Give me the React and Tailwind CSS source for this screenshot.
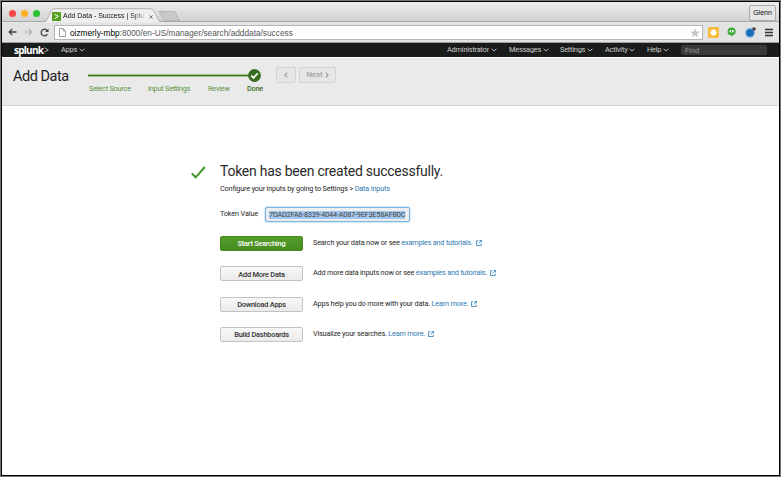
import React from "react";

const Chevron = ({ className = "" }) => (
  <svg viewBox="0 0 6 4" className={`h-[4px] w-[6px] shrink-0 ${className}`} fill="none" stroke="currentColor" strokeWidth="0.9">
    <path d="M0.6 0.7 3 3.1 5.4 0.7" />
  </svg>
);

const External = () => (
  <svg viewBox="0 0 12 12" className="mb-px ml-[3px] h-[6px] w-[6px] shrink-0" fill="none" stroke="#3a83b8" strokeWidth="1.700">
    <path d="M5 1.500H1v9.500h9.500V7M7 .9h4.200V5M11 1 5 7" />
  </svg>
);

function BrowserTabs() {
  return (
    <div className="flex h-[20px] shrink-0 border-b border-[#a9a9a9] bg-linear-to-b from-[#ececec] to-[#d2d2d2]">
      <div className="ml-[7px] mt-[8px] flex gap-[5px]">
        <span className="size-[7px] rounded-full bg-[#fc4548]" />
        <span className="size-[7px] rounded-full bg-[#fdaf24]" />
        <span className="size-[7px] rounded-full bg-[#28c231]" />
      </div>
      <div className="relative ml-[4px] mt-[6px] h-[15px] w-[141px]">
        <svg className="absolute inset-0" width="141" height="15" viewBox="0 0 141 15">
          <path d="M0 14.500C5 14 5 1 10 .8H107C111 1 113 14 117 14.500Z" fill="#efefef" />
          <path d="M0 13.500C5 13.500 5 1 10 .7H107C111 1 113 13.500 117 13.500" fill="none" stroke="#a5a5a5" strokeWidth=".8" />
          <path d="M115 3.500H130C132 3.500 134 12 136 12.500H121C118 12.500 117 5 115 3.500Z" fill="#c9c9c9" stroke="#aaa" strokeWidth=".7" />
        </svg>
        <div className="relative flex h-[17px] items-center pl-[8px] font-['Liberation_Sans',sans-serif] text-[7px] text-[#222]">
          <svg width="9" height="9" viewBox="0 0 9 9" className="shrink-0">
            <rect width="9" height="9" fill="#55a020" />
            <path d="M2.600 2.300 6.300 4.400 2.600 6.600" fill="none" stroke="#fff" strokeWidth="1" />
          </svg>
          <span className="ml-[2px] w-[83px] whitespace-nowrap bg-linear-to-r from-[#111] from-82% to-[#dcdcdc] bg-clip-text tracking-[-0.003em] text-transparent">Add Data - Success | Splu</span>
          <svg width="4" height="4" viewBox="0 0 4 4" className="ml-[3px] shrink-0" stroke="#777" strokeWidth=".9">
            <path d="M.3.3 3.700 3.700M3.700.3.3 3.700" />
          </svg>
        </div>
      </div>
      <div className="ml-auto mr-[3px] mt-[3px] flex h-[16px] w-[27px] items-center justify-center rounded-[2px] border border-[#aaa] bg-[#e6e6e6] pt-px font-['Liberation_Sans',sans-serif] text-[7px] text-[#111]">Glenn</div>
    </div>
  );
}

function AddressBar() {
  return (
    <div className="flex h-[21px] shrink-0 items-center border-b border-[#a0a0a0] bg-[#e3e3e3]">
      <svg width="9" height="8" viewBox="0 0 9 8" className="ml-[6px]" fill="none" stroke="#444" strokeWidth="1.300">
        <path d="M8.500 4H1.200M4.200 1 1.200 4l3 3" />
      </svg>
      <svg width="9" height="8" viewBox="0 0 9 8" className="ml-[7px]" fill="none" stroke="#b0b0b0" strokeWidth="1.200">
        <path d="M.5 4h7.300M4.800 1l3 3-3 3" />
      </svg>
      <svg width="9" height="9" viewBox="0 0 9 9" className="ml-[7px]" fill="none" stroke="#444" strokeWidth="1.300">
        <path d="M7.300 6.200A3.300 3.300 0 1 1 6.800 2.200" />
        <path d="M8.500.5v3.500H5z" fill="#444" stroke="none" />
      </svg>
      <div className="ml-[5px] flex h-[15px] flex-1 items-center border border-[#b5b5b5] bg-white font-['Liberation_Sans',sans-serif] text-[8.300px]">
        <svg width="7" height="9" viewBox="0 0 7 9" className="ml-[4px]" fill="#fff" stroke="#888" strokeWidth=".8">
          <path d="M.5.5h3.700L6.500 3v5.500h-6zM4.200.5V3h2.300" />
        </svg>
        <span className="ml-[4px] mt-[2px] whitespace-nowrap tracking-[-0.001em] text-[#555]"><span className="text-black">oizmerly-mbp</span>:8000/en-US/manager/search/adddata/success</span>
        <svg width="10" height="10" viewBox="0 0 10 10" className="ml-auto mr-[2px] mt-px">
          <path d="m5 .3 1.300 3.200 3.400.2-2.600 2.200.8 3.400L5 7.500 2.100 9.300l.8-3.400L.3 3.700l3.400-.2z" fill="#c7c7c7" />
        </svg>
      </div>
      <svg width="11" height="11" viewBox="0 0 11 11" className="ml-[5px]">
        <rect width="11" height="11" rx="1" fill="#f6bd3c" />
        <path d="M5.500 2.200v6.600M2.200 5.500h6.600M3.400 3.400l4.200 4.200M7.600 3.400 3.400 7.600" stroke="#fff" strokeWidth="1.500" />
      </svg>
      <svg width="9" height="11" viewBox="0 0 9 11" className="ml-[8px]">
        <path d="M4.500.5a4 4 0 0 1 1 7.900L4.500 10.300V8.500a4 4 0 0 1 0-8z" fill="#3cad3b" />
        <path d="M2.500 3h1.600v2L3 6V4.700h-.5zM5 3h1.600v2L5.500 6V4.700H5z" fill="#fff" />
      </svg>
      <svg width="11" height="11" viewBox="0 0 11 11" className="ml-[9px]">
        <circle cx="5" cy="5.800" r="4.600" fill="#e7f2fb" stroke="#74a5d0" strokeWidth=".8" />
        <circle cx="5" cy="5.800" r="3.900" fill="#136fb9" />
        <circle cx="9" cy="2" r="1.800" fill="#4b3b48" />
      </svg>
      <svg width="8" height="9" viewBox="0 0 8 9" className="ml-[9px] mr-[6px]" stroke="#333" strokeWidth="1.500">
        <path d="M0 1.500h8M0 4.500h8M0 7.500h8" />
      </svg>
    </div>
  );
}

function Menu({ width, children }) {
  return (
    <div className="flex shrink-0 items-center whitespace-nowrap tracking-[-0.03em]" style={{ width }}>
      {children}
      <Chevron className="ml-[2px]" />
    </div>
  );
}

function NavBar() {
  return (
    <div className="flex h-[14px] shrink-0 items-center bg-[#1a1c1b] text-[7.400px] text-[#ccc]">
      <div className="ml-[12px] flex w-[47px] items-center font-['Open_Sans',sans-serif] text-[10px] font-bold leading-none tracking-[-0.075em] text-white">
        <span className="-mt-[1px]">splunk</span>
        <svg width="5" height="6" viewBox="0 0 5 6" className="ml-px" fill="none" stroke="#aaa" strokeWidth="1">
          <path d="M.3.7 4.300 3 .3 5.300" />
        </svg>
      </div>
      <Menu width={386}>Apps</Menu>
      <Menu width={62}>Administrator</Menu>
      <Menu width={51}>Messages</Menu>
      <Menu width={45}>Settings</Menu>
      <Menu width={42}>Activity</Menu>
      <Menu width={34}>Help</Menu>
      <div className="flex h-[10px] w-[86px] items-center rounded-[2px] bg-[#3a3a3a] pl-[4px] pt-px text-[#999]">Find</div>
    </div>
  );
}

function Header() {
  return (
    <div className="flex h-[48px] shrink-0 border-b border-[#d2d2d2] bg-[#eaeaea] text-[#222]">
      <h1 className="ml-[11px] mt-[9px] w-[73px] whitespace-nowrap text-[14.500px] leading-[20px] tracking-[-0.032em]">Add Data</h1>
      <div className="mt-[11px] w-[190px]">
        <div className="flex h-[13px] items-center">
          <div className="ml-[2px] h-[3px] w-[161px] border-y border-[#a4c491] bg-[#3b711f]" />
          <svg width="13" height="13" viewBox="0 0 13 13" className="-ml-[1px]">
            <circle cx="6.500" cy="6.500" r="6.400" fill="#396c1f" />
            <path d="m3.200 6.600 2.300 2.300L9.800 4.200" fill="none" stroke="#fff" strokeWidth="1.700" />
          </svg>
        </div>
        <div className="ml-[3px] mt-[2px] flex whitespace-nowrap text-[7.300px] leading-[10px] tracking-[-0.028em] text-[#5c9440]">
          <span className="w-[59px]">Select Source</span>
          <span className="w-[60px]">Input Settings</span>
          <span className="w-[39px]">Review</span>
          <span className="font-medium text-[#3c6b25]">Done</span>
        </div>
      </div>
      <div className="mt-[9px] flex h-[16px] gap-[3px] text-[8px] font-medium text-[#a3a3a3]">
        <div className="flex w-[20px] items-center justify-center rounded-[2px] border border-[#d2d2d2] bg-[#e6e6e6]">
          <svg width="4" height="6" viewBox="0 0 4 7" fill="none" stroke="#999" strokeWidth="1.300"><path d="M3.500.6.7 3.500l2.800 2.900" /></svg>
        </div>
        <div className="flex w-[37px] items-center justify-center gap-[2px] rounded-[2px] border border-[#d2d2d2] bg-[#e6e6e6] tracking-[-0.02em]">
          Next
          <svg width="4" height="6" viewBox="0 0 4 7" fill="none" stroke="#999" strokeWidth="1.300"><path d="M.5.6l2.800 2.900L.5 6.400" /></svg>
        </div>
      </div>
    </div>
  );
}

function ActionRow({ label, text, link, primary }) {
  return (
    <div className="flex h-[15px] items-center whitespace-nowrap">
      <button className={`h-[15px] w-[83px] rounded-[2px] border pt-px text-[7.400px] font-medium leading-none tracking-[-0.03em] ${primary ? "border-[#46891f] bg-linear-to-b from-[#559d2a] to-[#468c21] text-white" : "border-[#c2c2c2] bg-linear-to-b from-[#f8f8f8] to-[#ebebeb] text-[#333]"}`}>{label}</button>
      <span className="ml-[10px]">{text} <a className="text-[#2f7ab4]">{link}</a></span>
      <External />
    </div>
  );
}

export default function App() {
  return (
    <div className="h-[477px] w-[781px] overflow-hidden border border-[#777] bg-white font-['Roboto',sans-serif]">
      <div className="flex h-[475px] flex-col border border-black">
        <BrowserTabs />
        <AddressBar />
        <NavBar />
        <div className="h-px shrink-0 bg-[#fafafa]" />
        <Header />
        <main className="ml-[189px] mt-[56px] flex text-[7.300px] tracking-[-0.026em] text-[#2a2a2a]">
          <svg width="15" height="13" viewBox="0 0 15 13" className="mt-[4px]" fill="none" stroke="#459a25" strokeWidth="2">
            <path d="M.8 7.500 4.700 11.300 13.800 1" />
          </svg>
          <div className="ml-[14px]">
            <h2 className="whitespace-nowrap text-[14px] leading-[18px] tracking-[-0.018em]">Token has been created successfully.</h2>
            <p className="mt-[4px] whitespace-nowrap leading-[10px] tracking-[-0.025em]">Configure your inputs by going to Settings &gt; <a className="text-[#2f7ab4]">Data Inputs</a></p>
            <div className="mt-[12px] flex h-[17px] items-center whitespace-nowrap">
              <span className="w-[45px] tracking-[-0.02em]">Token Value</span>
              <div className="flex h-[15px] w-[145px] items-center rounded-[2px] border border-[#78b3e2] bg-[#eee] pl-[3px] shadow-[0_0_2px_#7abaf0]">
                <span className="bg-[#a3c8ef] leading-[8px] tracking-[-0.028em] text-[#444]">7DAD2FA6-8339-4044-A087-9EF3E58AFB0C</span>
              </div>
            </div>
            <div className="mt-[13px] flex flex-col gap-[15.250px]">
              <ActionRow primary label="Start Searching" text="Search your data now or see" link="examples and tutorials." />
              <ActionRow label="Add More Data" text="Add more data inputs now or see" link="examples and tutorials." />
              <ActionRow label="Download Apps" text="Apps help you do more with your data." link="Learn more." />
              <ActionRow label="Build Dashboards" text="Visualize your searches." link="Learn more." />
            </div>
          </div>
        </main>
      </div>
    </div>
  );
}
